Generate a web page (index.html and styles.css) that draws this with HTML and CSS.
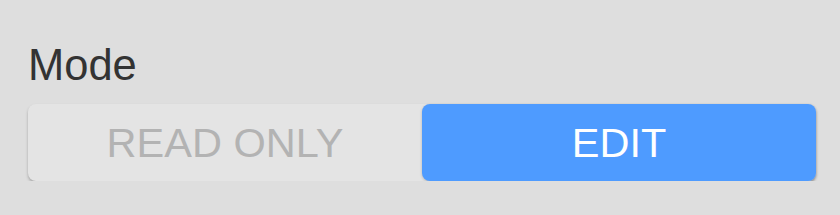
FILE: index.html
```html
<!DOCTYPE html>
<html lang="en">
  <head>
    <meta charset="UTF-8" />
    <meta name="viewport" content="width=device-width, initial-scale=1.0" />
    <title>Mode</title>
    <link rel="stylesheet" href="styles.css">
  </head>
  <body>
    <div class="container">
      <div class="label">Mode</div>
      <div class="toggle">
        <button class="option">READ ONLY</button>
        <button class="option active">EDIT</button>
      </div>
    </div>
  </body>
</html>
```

FILE: styles.css
```css
* {
  margin: 0;
  box-sizing: border-box;
}
body {
  background-color: #dedede;
  font-family: "Liberation Sans", Arial, sans-serif;
}
.container {
  padding: 41px 24px 0 28px;
}
.label {
  font-size: 43.5px;
  line-height: 48px;
  color: #333333;
}
.toggle {
  display: flex;
  margin-top: 15px;
  height: 77px;
  background-color: #e4e4e4;
  border-radius: 8px;
  box-shadow: 0 2px 3px rgba(0, 0, 0, 0.25);
}
.option {
  flex: 1;
  border: none;
  background: none;
  font-family: inherit;
  font-size: 41.5px;
  color: #b3b3b3;
  border-radius: 8px;
  padding: 0;
}
.option.active {
  background-color: #4e9bff;
  color: #ffffff;
  box-shadow: 0 1px 3px rgba(0, 0, 0, 0.2);
}
```
